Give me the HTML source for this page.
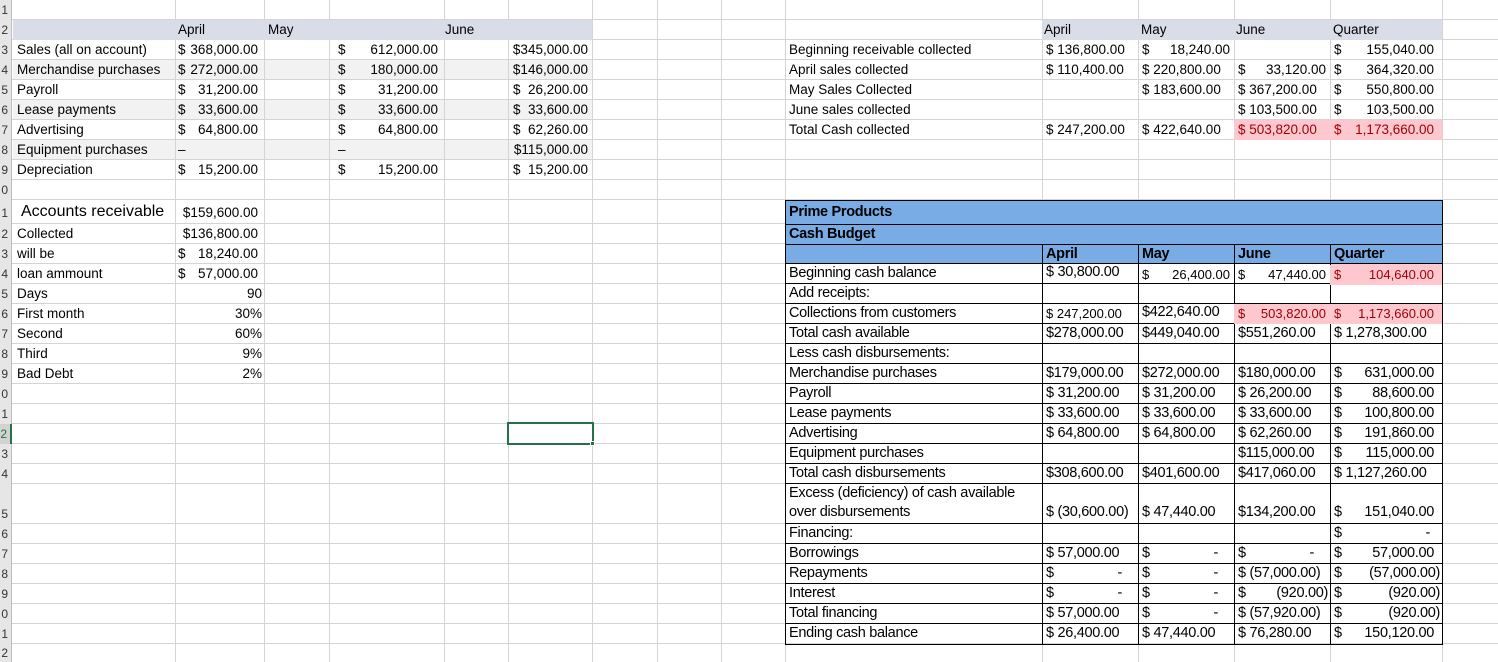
<!DOCTYPE html>
<html><head><meta charset="utf-8"><style>
*{margin:0;padding:0;box-sizing:border-box}
body{width:1498px;height:662px;overflow:hidden;background:#fff;position:relative;font-family:"Liberation Sans",sans-serif;font-size:13.5px;color:#000}
.v{position:absolute;top:0;width:1px;height:662px;background:#d4d4d4}
.h{position:absolute;left:0;height:1px;width:1498px;background:#d4d4d4}
.rh{position:absolute;left:0;width:12px;background:#e6e6e6;border-right:1px solid #bdbdbd;overflow:hidden;font-size:12px;color:#333;text-align:right;direction:rtl;letter-spacing:3px}
.c{position:absolute;height:20px;line-height:20px;white-space:nowrap;padding:0 4px}
.a{display:flex;justify-content:space-between}
.r{text-align:right}
.bg{position:absolute}
.cb{font-size:14.5px;letter-spacing:-0.3px}
.bx{position:absolute;border:1px solid #000}
.pk{background:#ffc7ce;color:#9c0006}
</style></head><body>
<div class="bg" style="left:13px;top:60px;width:580px;height:20px;background:#f2f2f2"></div>
<div class="bg" style="left:13px;top:100px;width:580px;height:20px;background:#f2f2f2"></div>
<div class="bg" style="left:13px;top:140px;width:580px;height:20px;background:#f2f2f2"></div>
<div class="v" style="left:175px"></div><div class="v" style="left:264px"></div><div class="v" style="left:329px"></div><div class="v" style="left:444px"></div><div class="v" style="left:508px"></div><div class="v" style="left:592px"></div><div class="v" style="left:657px"></div><div class="v" style="left:721px"></div><div class="v" style="left:785px"></div><div class="v" style="left:1042px"></div><div class="v" style="left:1138px"></div><div class="v" style="left:1234px"></div><div class="v" style="left:1330px"></div><div class="v" style="left:1442px"></div>
<div class="h" style="top:19px"></div><div class="h" style="top:39px"></div><div class="h" style="top:59px"></div><div class="h" style="top:79px"></div><div class="h" style="top:99px"></div><div class="h" style="top:119px"></div><div class="h" style="top:139px"></div><div class="h" style="top:159px"></div><div class="h" style="top:179px"></div><div class="h" style="top:199px"></div><div class="h" style="top:223px"></div><div class="h" style="top:243px"></div><div class="h" style="top:263px"></div><div class="h" style="top:283px"></div><div class="h" style="top:303px"></div><div class="h" style="top:323px"></div><div class="h" style="top:343px"></div><div class="h" style="top:363px"></div><div class="h" style="top:383px"></div><div class="h" style="top:403px"></div><div class="h" style="top:423px"></div><div class="h" style="top:443px"></div><div class="h" style="top:463px"></div><div class="h" style="top:483px"></div><div class="h" style="top:523px"></div><div class="h" style="top:543px"></div><div class="h" style="top:563px"></div><div class="h" style="top:583px"></div><div class="h" style="top:603px"></div><div class="h" style="top:623px"></div><div class="h" style="top:643px"></div>
<div class="rh" style="top:0;height:20px;line-height:20px">1</div><div class="rh" style="top:20px;height:20px;line-height:20px">2</div><div class="rh" style="top:40px;height:20px;line-height:20px">3</div><div class="rh" style="top:60px;height:20px;line-height:20px">4</div><div class="rh" style="top:80px;height:20px;line-height:20px">5</div><div class="rh" style="top:100px;height:20px;line-height:20px">6</div><div class="rh" style="top:120px;height:20px;line-height:20px">7</div><div class="rh" style="top:140px;height:20px;line-height:20px">8</div><div class="rh" style="top:160px;height:20px;line-height:20px">9</div><div class="rh" style="top:180px;height:20px;line-height:20px">10</div><div class="rh" style="top:200px;height:24px;line-height:26px">11</div><div class="rh" style="top:224px;height:20px;line-height:20px">12</div><div class="rh" style="top:244px;height:20px;line-height:20px">13</div><div class="rh" style="top:264px;height:20px;line-height:20px">14</div><div class="rh" style="top:284px;height:20px;line-height:20px">15</div><div class="rh" style="top:304px;height:20px;line-height:20px">16</div><div class="rh" style="top:324px;height:20px;line-height:20px">17</div><div class="rh" style="top:344px;height:20px;line-height:20px">18</div><div class="rh" style="top:364px;height:20px;line-height:20px">19</div><div class="rh" style="top:384px;height:20px;line-height:20px">20</div><div class="rh" style="top:404px;height:20px;line-height:20px">21</div><div class="rh" style="top:424px;height:20px;line-height:20px;background:#d2d2d2;border-right:2px solid #217346;color:#217346">22</div><div class="rh" style="top:444px;height:20px;line-height:20px">23</div><div class="rh" style="top:464px;height:20px;line-height:20px">24</div><div class="rh" style="top:484px;height:40px;line-height:60px">25</div><div class="rh" style="top:524px;height:20px;line-height:20px">26</div><div class="rh" style="top:544px;height:20px;line-height:20px">27</div><div class="rh" style="top:564px;height:20px;line-height:20px">28</div><div class="rh" style="top:584px;height:20px;line-height:20px">29</div><div class="rh" style="top:604px;height:20px;line-height:20px">30</div><div class="rh" style="top:624px;height:20px;line-height:20px">31</div><div class="rh" style="top:644px;height:18px;line-height:18px">32</div>

<div class="bg" style="left:13px;top:20px;width:579px;height:20px;background:#d9dde7"></div>
<div class="c" style="left:174px;top:20px">April</div>
<div class="c" style="left:264px;top:20px">May</div>
<div class="c" style="left:441px;top:20px">June</div>

<div class="c" style="left:13px;top:40px">Sales (all on account)</div>
<div class="c" style="left:13px;top:60px">Merchandise purchases</div>
<div class="c" style="left:13px;top:80px">Payroll</div>
<div class="c" style="left:13px;top:100px">Lease payments</div>
<div class="c" style="left:13px;top:120px">Advertising</div>
<div class="c" style="left:13px;top:140px">Equipment purchases</div>
<div class="c" style="left:13px;top:160px">Depreciation</div>

<div class="c a" style="left:175px;top:40px;width:89px;padding:0 6px 0 3px"><span>$</span><span>368,000.00</span></div>
<div class="c a" style="left:175px;top:60px;width:89px;padding:0 6px 0 3px"><span>$</span><span>272,000.00</span></div>
<div class="c a" style="left:175px;top:80px;width:89px;padding:0 6px 0 3px"><span>$</span><span>31,200.00</span></div>
<div class="c a" style="left:175px;top:100px;width:89px;padding:0 6px 0 3px"><span>$</span><span>33,600.00</span></div>
<div class="c a" style="left:175px;top:120px;width:89px;padding:0 6px 0 3px"><span>$</span><span>64,800.00</span></div>
<div class="c" style="left:175px;top:140px;padding-left:3px">–</div>
<div class="c a" style="left:175px;top:160px;width:89px;padding:0 6px 0 3px"><span>$</span><span>15,200.00</span></div>

<div class="c" style="left:334px;top:40px">$</div><div class="c r" style="left:329px;top:40px;width:115px;padding-right:6px">612,000.00</div>
<div class="c" style="left:334px;top:60px">$</div><div class="c r" style="left:329px;top:60px;width:115px;padding-right:6px">180,000.00</div>
<div class="c" style="left:334px;top:80px">$</div><div class="c r" style="left:329px;top:80px;width:115px;padding-right:6px">31,200.00</div>
<div class="c" style="left:334px;top:100px">$</div><div class="c r" style="left:329px;top:100px;width:115px;padding-right:6px">33,600.00</div>
<div class="c" style="left:334px;top:120px">$</div><div class="c r" style="left:329px;top:120px;width:115px;padding-right:6px">64,800.00</div>
<div class="c" style="left:334px;top:140px">–</div>
<div class="c" style="left:334px;top:160px">$</div><div class="c r" style="left:329px;top:160px;width:115px;padding-right:6px">15,200.00</div>

<div class="c r" style="left:508px;top:40px;width:84px">$345,000.00</div>
<div class="c r" style="left:508px;top:60px;width:84px">$146,000.00</div>
<div class="c a" style="left:508px;top:80px;width:84px;padding:0 4px 0 5px"><span>$</span><span>26,200.00</span></div>
<div class="c a" style="left:508px;top:100px;width:84px;padding:0 4px 0 5px"><span>$</span><span>33,600.00</span></div>
<div class="c a" style="left:508px;top:120px;width:84px;padding:0 4px 0 5px"><span>$</span><span>62,260.00</span></div>
<div class="c r" style="left:508px;top:140px;width:84px">$115,000.00</div>
<div class="c a" style="left:508px;top:160px;width:84px;padding:0 4px 0 5px"><span>$</span><span>15,200.00</span></div>

<div class="c" style="left:17px;top:202px;font-size:16px">Accounts receivable</div>
<div class="c r" style="left:175px;top:203px;width:89px;padding-right:6px">$159,600.00</div>
<div class="c" style="left:13px;top:224px">Collected</div><div class="c r" style="left:175px;top:224px;width:89px;padding-right:6px">$136,800.00</div>
<div class="c" style="left:13px;top:244px">will be</div><div class="c a" style="left:175px;top:244px;width:89px;padding:0 6px 0 3px"><span>$</span><span>18,240.00</span></div>
<div class="c" style="left:13px;top:264px">loan ammount</div><div class="c a" style="left:175px;top:264px;width:89px;padding:0 6px 0 3px"><span>$</span><span>57,000.00</span></div>
<div class="c" style="left:13px;top:284px">Days</div><div class="c r" style="left:175px;top:284px;width:89px;padding-right:2px">90</div>
<div class="c" style="left:13px;top:304px">First month</div><div class="c r" style="left:175px;top:304px;width:89px;padding-right:2px">30%</div>
<div class="c" style="left:13px;top:324px">Second</div><div class="c r" style="left:175px;top:324px;width:89px;padding-right:2px">60%</div>
<div class="c" style="left:13px;top:344px">Third</div><div class="c r" style="left:175px;top:344px;width:89px;padding-right:2px">9%</div>
<div class="c" style="left:13px;top:364px">Bad Debt</div><div class="c r" style="left:175px;top:364px;width:89px;padding-right:2px">2%</div>

<div class="bg" style="left:507px;top:422px;width:87px;height:23px;border:2px solid #217346"></div>
<div class="bg" style="left:590px;top:441px;width:5px;height:5px;background:#217346;border:1px solid #fff"></div>

<div class="bg" style="left:1042px;top:20px;width:400px;height:20px;background:#d9dde7"></div>
<div class="c" style="left:1040px;top:20px">April</div><div class="c" style="left:1137px;top:20px">May</div><div class="c" style="left:1232px;top:20px">June</div><div class="c" style="left:1329px;top:20px">Quarter</div>
<div class="c" style="left:785px;top:40px">Beginning receivable collected</div>
<div class="c" style="left:785px;top:60px">April sales collected</div>
<div class="c" style="left:785px;top:80px">May Sales Collected</div>
<div class="c" style="left:785px;top:100px">June sales collected</div>
<div class="c" style="left:785px;top:120px">Total Cash collected</div>

<div class="c" style="left:1042px;top:40px">$ 136,800.00</div>
<div class="c" style="left:1042px;top:60px">$ 110,400.00</div>
<div class="c" style="left:1042px;top:120px">$ 247,200.00</div>
<div class="c a" style="left:1138px;top:40px;width:96px"><span>$</span><span>18,240.00</span></div>
<div class="c" style="left:1138px;top:60px">$ 220,800.00</div>
<div class="c" style="left:1138px;top:80px">$ 183,600.00</div>
<div class="c" style="left:1138px;top:120px">$ 422,640.00</div>
<div class="c a" style="left:1234px;top:60px;width:96px"><span>$</span><span>33,120.00</span></div>
<div class="c" style="left:1234px;top:80px">$ 367,200.00</div>
<div class="c" style="left:1234px;top:100px">$ 103,500.00</div>
<div class="c pk" style="left:1234px;top:120px;width:96px">$ 503,820.00</div>
<div class="c a" style="left:1330px;top:40px;width:112px;padding-right:8px"><span>$</span><span>155,040.00</span></div>
<div class="c a" style="left:1330px;top:60px;width:112px;padding-right:8px"><span>$</span><span>364,320.00</span></div>
<div class="c a" style="left:1330px;top:80px;width:112px;padding-right:8px"><span>$</span><span>550,800.00</span></div>
<div class="c a" style="left:1330px;top:100px;width:112px;padding-right:8px"><span>$</span><span>103,500.00</span></div>
<div class="c a pk" style="left:1330px;top:120px;width:112px;padding-right:8px"><span>$</span><span>1,173,660.00</span></div>

<div class="bg" style="left:785px;top:200px;width:658px;height:64px;background:#79ace4"></div>
<div class="bg pk" style="left:1330px;top:264px;width:112px;height:20px"></div>
<div class="bg pk" style="left:1234px;top:304px;width:208px;height:20px"></div>
<div class="bx" style="left:785px;top:200px;width:658px;height:445px"></div>
<div class="bg" style="left:785px;top:224px;width:658px;height:1px;background:#000"></div>
<div class="bg" style="left:785px;top:244px;width:658px;height:1px;background:#000"></div>
<div class="bg" style="left:1042px;top:244px;width:1px;height:400px;background:#000"></div>
<div class="bg" style="left:1138px;top:244px;width:1px;height:400px;background:#000"></div>
<div class="bg" style="left:1234px;top:244px;width:1px;height:400px;background:#000"></div>
<div class="bg" style="left:1330px;top:244px;width:1px;height:400px;background:#000"></div>
<div class="h" style="top:263px;left:785px;width:658px;background:#000"></div><div class="h" style="top:283px;left:785px;width:658px;background:#000"></div><div class="h" style="top:303px;left:785px;width:658px;background:#000"></div><div class="h" style="top:323px;left:785px;width:658px;background:#000"></div><div class="h" style="top:343px;left:785px;width:658px;background:#000"></div><div class="h" style="top:363px;left:785px;width:658px;background:#000"></div><div class="h" style="top:383px;left:785px;width:658px;background:#000"></div><div class="h" style="top:403px;left:785px;width:658px;background:#000"></div><div class="h" style="top:423px;left:785px;width:658px;background:#000"></div><div class="h" style="top:443px;left:785px;width:658px;background:#000"></div><div class="h" style="top:463px;left:785px;width:658px;background:#000"></div><div class="h" style="top:483px;left:785px;width:658px;background:#000"></div><div class="h" style="top:523px;left:785px;width:658px;background:#000"></div><div class="h" style="top:543px;left:785px;width:658px;background:#000"></div><div class="h" style="top:563px;left:785px;width:658px;background:#000"></div><div class="h" style="top:583px;left:785px;width:658px;background:#000"></div><div class="h" style="top:603px;left:785px;width:658px;background:#000"></div><div class="h" style="top:623px;left:785px;width:658px;background:#000"></div>

<div class="c cb" style="left:785px;top:202px;font-weight:bold">Prime Products</div>
<div class="c cb" style="left:785px;top:224px;font-weight:bold">Cash Budget</div>
<div class="c cb" style="left:1042px;top:244px;font-weight:bold">April</div>
<div class="c cb" style="left:1138px;top:244px;font-weight:bold">May</div>
<div class="c cb" style="left:1234px;top:244px;font-weight:bold">June</div>
<div class="c cb" style="left:1330px;top:244px;font-weight:bold">Quarter</div>

<div class="c cb" style="left:785px;top:263px">Beginning cash balance</div>
<div class="c cb" style="left:785px;top:283px">Add receipts:</div>
<div class="c cb" style="left:785px;top:303px">Collections from customers</div>
<div class="c cb" style="left:785px;top:323px">Total cash available</div>
<div class="c cb" style="left:785px;top:343px">Less cash disbursements:</div>
<div class="c cb" style="left:785px;top:363px">Merchandise purchases</div>
<div class="c cb" style="left:785px;top:383px">Payroll</div>
<div class="c cb" style="left:785px;top:403px">Lease payments</div>
<div class="c cb" style="left:785px;top:423px">Advertising</div>
<div class="c cb" style="left:785px;top:443px">Equipment purchases</div>
<div class="c cb" style="left:785px;top:463px">Total cash disbursements</div>
<div class="c cb" style="left:785px;top:483px">Excess (deficiency) of cash available</div>
<div class="c cb" style="left:785px;top:502px">over disbursements</div>
<div class="c cb" style="left:785px;top:523px">Financing:</div>
<div class="c cb" style="left:785px;top:543px">Borrowings</div>
<div class="c cb" style="left:785px;top:563px">Repayments</div>
<div class="c cb" style="left:785px;top:583px">Interest</div>
<div class="c cb" style="left:785px;top:603px">Total financing</div>
<div class="c cb" style="left:785px;top:623px">Ending cash balance</div>

<div class="c cb" style="left:1042px;top:262px">$ 30,800.00</div>
<div class="c" style="left:1042px;top:304px;font-size:13px">$ 247,200.00</div>
<div class="c cb" style="left:1042px;top:323px">$278,000.00</div>
<div class="c cb" style="left:1042px;top:363px">$179,000.00</div>
<div class="c cb" style="left:1042px;top:383px">$ 31,200.00</div>
<div class="c cb" style="left:1042px;top:403px">$ 33,600.00</div>
<div class="c cb" style="left:1042px;top:423px">$ 64,800.00</div>
<div class="c cb" style="left:1042px;top:463px">$308,600.00</div>
<div class="c cb" style="left:1042px;top:502px">$ (30,600.00)</div>
<div class="c cb" style="left:1042px;top:543px">$ 57,000.00</div>
<div class="c cb a" style="left:1042px;top:563px;width:96px;padding-right:16px"><span>$</span><span>-</span></div>
<div class="c cb a" style="left:1042px;top:583px;width:96px;padding-right:16px"><span>$</span><span>-</span></div>
<div class="c cb" style="left:1042px;top:603px">$ 57,000.00</div>
<div class="c cb" style="left:1042px;top:623px">$ 26,400.00</div>

<div class="c a" style="left:1138px;top:265px;width:96px;font-size:13px"><span>$</span><span>26,400.00</span></div>
<div class="c cb" style="left:1138px;top:302px">$422,640.00</div>
<div class="c cb" style="left:1138px;top:323px">$449,040.00</div>
<div class="c cb" style="left:1138px;top:363px">$272,000.00</div>
<div class="c cb" style="left:1138px;top:383px">$ 31,200.00</div>
<div class="c cb" style="left:1138px;top:403px">$ 33,600.00</div>
<div class="c cb" style="left:1138px;top:423px">$ 64,800.00</div>
<div class="c cb" style="left:1138px;top:463px">$401,600.00</div>
<div class="c cb" style="left:1138px;top:502px">$ 47,440.00</div>
<div class="c cb a" style="left:1138px;top:543px;width:96px;padding-right:16px"><span>$</span><span>-</span></div>
<div class="c cb a" style="left:1138px;top:563px;width:96px;padding-right:16px"><span>$</span><span>-</span></div>
<div class="c cb a" style="left:1138px;top:583px;width:96px;padding-right:16px"><span>$</span><span>-</span></div>
<div class="c cb a" style="left:1138px;top:603px;width:96px;padding-right:16px"><span>$</span><span>-</span></div>
<div class="c cb" style="left:1138px;top:623px">$ 47,440.00</div>

<div class="c a" style="left:1234px;top:265px;width:96px;font-size:13px"><span>$</span><span>47,440.00</span></div>
<div class="c a pk" style="left:1234px;top:304px;width:96px;font-size:13px"><span>$</span><span>503,820.00</span></div>
<div class="c cb" style="left:1234px;top:323px">$551,260.00</div>
<div class="c cb" style="left:1234px;top:363px">$180,000.00</div>
<div class="c cb" style="left:1234px;top:383px">$ 26,200.00</div>
<div class="c cb" style="left:1234px;top:403px">$ 33,600.00</div>
<div class="c cb" style="left:1234px;top:423px">$ 62,260.00</div>
<div class="c cb" style="left:1234px;top:443px">$115,000.00</div>
<div class="c cb" style="left:1234px;top:463px">$417,060.00</div>
<div class="c cb" style="left:1234px;top:502px">$134,200.00</div>
<div class="c cb a" style="left:1234px;top:543px;width:96px;padding-right:16px"><span>$</span><span>-</span></div>
<div class="c cb" style="left:1234px;top:563px">$ (57,000.00)</div>
<div class="c cb a" style="left:1234px;top:583px;width:96px;padding-right:2px"><span>$</span><span>(920.00)</span></div>
<div class="c cb" style="left:1234px;top:603px">$ (57,920.00)</div>
<div class="c cb" style="left:1234px;top:623px">$ 76,280.00</div>

<div class="c a pk" style="left:1330px;top:265px;width:112px;padding-right:8px;font-size:13px"><span>$</span><span>104,640.00</span></div>
<div class="c a pk" style="left:1330px;top:304px;width:112px;padding-right:8px;font-size:13px"><span>$</span><span>1,173,660.00</span></div>
<div class="c cb" style="left:1330px;top:323px">$ 1,278,300.00</div>
<div class="c cb a" style="left:1330px;top:363px;width:112px;padding-right:8px"><span>$</span><span>631,000.00</span></div>
<div class="c cb a" style="left:1330px;top:383px;width:112px;padding-right:8px"><span>$</span><span>88,600.00</span></div>
<div class="c cb a" style="left:1330px;top:403px;width:112px;padding-right:8px"><span>$</span><span>100,800.00</span></div>
<div class="c cb a" style="left:1330px;top:423px;width:112px;padding-right:8px"><span>$</span><span>191,860.00</span></div>
<div class="c cb a" style="left:1330px;top:443px;width:112px;padding-right:8px"><span>$</span><span>115,000.00</span></div>
<div class="c cb" style="left:1330px;top:463px">$ 1,127,260.00</div>
<div class="c cb a" style="left:1330px;top:502px;width:112px;padding-right:8px"><span>$</span><span>151,040.00</span></div>
<div class="c cb a" style="left:1330px;top:523px;width:112px;padding-right:12px"><span>$</span><span>-</span></div>
<div class="c cb a" style="left:1330px;top:543px;width:112px;padding-right:8px"><span>$</span><span>57,000.00</span></div>
<div class="c cb a" style="left:1330px;top:563px;width:112px;padding-right:2px"><span>$</span><span>(57,000.00)</span></div>
<div class="c cb a" style="left:1330px;top:583px;width:112px;padding-right:2px"><span>$</span><span>(920.00)</span></div>
<div class="c cb a" style="left:1330px;top:603px;width:112px;padding-right:2px"><span>$</span><span>(920.00)</span></div>
<div class="c cb a" style="left:1330px;top:623px;width:112px;padding-right:8px"><span>$</span><span>150,120.00</span></div>
</body></html>
